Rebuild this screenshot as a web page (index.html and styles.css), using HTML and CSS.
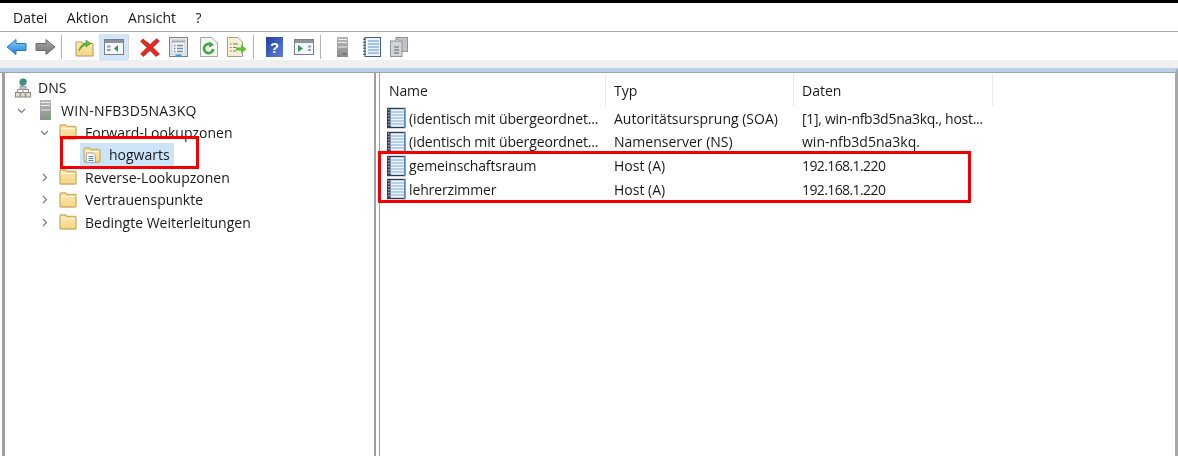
FILE: index.html
```html
<!DOCTYPE html>
<html lang="de">
  <head>
    <meta charset="UTF-8" />
    <title>DNS-Manager</title>
    <link rel="stylesheet" href="styles.css">
  </head>
  <body>
    <svg class="defs" width="0" height="0">
      <defs>
        <linearGradient id="folderFill" x1="0" y1="0" x2="0" y2="1">
          <stop offset="0" stop-color="#fbe9b0" />
          <stop offset="1" stop-color="#f5d586" />
        </linearGradient>
        <linearGradient id="blueArrow" x1="0" y1="0" x2="0" y2="1">
          <stop offset="0" stop-color="#8ad0fa" />
          <stop offset="1" stop-color="#1c80d8" />
        </linearGradient>
        <linearGradient id="grayArrow" x1="0" y1="0" x2="0" y2="1">
          <stop offset="0" stop-color="#a8a8a8" />
          <stop offset="1" stop-color="#747474" />
        </linearGradient>
        <linearGradient id="serverFill" x1="0" y1="0" x2="0" y2="1">
          <stop offset="0" stop-color="#b8b8b8" />
          <stop offset="1" stop-color="#8c8c8c" />
        </linearGradient>
        <linearGradient id="helpFill" x1="0" y1="0" x2="1" y2="1">
          <stop offset="0" stop-color="#1f3f9c" />
          <stop offset="1" stop-color="#5d80d8" />
        </linearGradient>
        <symbol id="folder" viewBox="0 0 18 16">
          <path d="M1 14.5 V2 Q1 1 2 1 H6.5 L8 2.5 H16 Q17 2.5 17 3.5 V14.5 Q17 15 16 15 H2 Q1 15 1 14.5 Z" fill="url(#folderFill)" stroke="#cfae66" stroke-width="1.3" />
          <path d="M2 4.5 H16" stroke="#fff8dc" />
        </symbol>
        <symbol id="record" viewBox="0 0 20 22">
          <rect x="1" y=".8" width="18.4" height="20.4" fill="#2c3d5c" />
          <rect x="18" y=".8" width="1.4" height="20.4" fill="#5f86b8" />
          <rect x="4.6" y="2.2" width="13.4" height="17.6" fill="#edf4fb" />
          <path d="M4.6 5H18M4.6 8H18M4.6 11H18M4.6 14H18M4.6 17H18" stroke="#a3c3e2" stroke-width="1.4" />
          <path d="M2.8 2V20" stroke="#b4bac2" stroke-width="1.4" stroke-dasharray="1.5 1.5" />
        </symbol>
      </defs>
    </svg>

    <nav class="menubar">
      <span>Datei</span>
      <span>Aktion</span>
      <span>Ansicht</span>
      <span>?</span>
    </nav>

    <div class="toolbar">
      <svg class="tool tool-back" width="21" height="18" viewBox="0 0 21 18"><path d="M1 9 L10 1.5 V5.5 H20 V12.5 H10 V16.5 Z" fill="url(#blueArrow)" stroke="#2a78bd" /></svg>
      <svg class="tool tool-forward" width="21" height="18" viewBox="0 0 21 18"><path d="M20 9 L11 1.5 V5.5 H1 V12.5 H11 V16.5 Z" fill="url(#grayArrow)" stroke="#6f6f6f" /></svg>
      <i class="sep sep-a"></i>
      <svg class="tool tool-up" width="19" height="20" viewBox="0 0 19 20"><path d="M1 5 H7 L8 6.5 H18 V19 H1 Z" fill="url(#folderFill)" stroke="#b8975a" /><path d="M4 14 Q5 7 11 6 V3 L16 6.5 L11 10 V8 Q7 9 4 14 Z" fill="#6cb83c" stroke="#4a8f28" stroke-width=".6" /></svg>
      <span class="tool-active">
        <svg width="20" height="16" viewBox="0 0 20 16"><rect x=".5" y=".5" width="19" height="15" fill="#f4f6f8" stroke="#77808a" /><rect x="1" y="1" width="18" height="3" fill="#8d949c" /><path d="M3 6.5H6.5V8.5H3ZM3 10H6.5V12H3Z" fill="#8ba0b8" /><path d="M14 6 V13 L10 9.5 Z" fill="#2f9a4a" /></svg>
      </span>
      <i class="sep sep-b"></i>
      <svg class="tool tool-delete" width="20" height="19" viewBox="0 0 20 19"><path d="M3 1 L10 6.5 L16.5 .8 L19.5 3 L13 9.5 L19.5 16 L16 18.5 L10 12.5 L3.5 18.5 L.6 16 L7 9.5 L.5 3.2 Z" fill="#e02b20" stroke="#a51a14" stroke-width=".6" /></svg>
      <svg class="tool tool-props" width="19" height="20" viewBox="0 0 19 20"><rect x=".5" y=".5" width="18" height="19" fill="#e6e9ec" stroke="#7c8288" /><rect x="3" y="3" width="13" height="14" fill="#f5f6f7" stroke="#b4b9be" stroke-width=".6" /><path d="M3 4.5H16" stroke="#a8adb3" stroke-width="2" /><path d="M5 8.5H6.5M8 8.5H14M5 11.5H6.5M8 11.5H14M5 14.5H6.5M8 14.5H14" stroke="#6f90b5" stroke-width="1.3" /><path d="M6.5 18.5H12.5" stroke="#2fa0e6" stroke-width="2" /></svg>
      <svg class="tool tool-refresh" width="18" height="20" viewBox="0 0 18 20"><path d="M.5 .5H12L17.5 6V19.5H.5Z" fill="#f4f6f2" stroke="#a4a9a4" /><path d="M13.2 12 A4.6 4.6 0 1 1 11 7.6" fill="none" stroke="#3fa648" stroke-width="2.6" /><path d="M9.5 4.5 L14 8 L9 10.5 Z" fill="#3fa648" /></svg>
      <svg class="tool tool-export" width="20" height="20" viewBox="0 0 20 20"><path d="M.5 .5H11L15.5 5V19.5H.5Z" fill="#f6efd4" stroke="#a4a08c" /><path d="M3 7H4.5M6 7H11M3 10.5H4.5M6 10.5H9M3 14H4.5M6 14H9" stroke="#777" stroke-width="1.2" /><path d="M9 10.5H14V7.5L19.5 12L14 16.5V13.5H9Z" fill="#5fbd3a" /></svg>
      <i class="sep sep-c"></i>
      <svg class="tool tool-help" width="17" height="20" viewBox="0 0 17 20"><rect width="17" height="20" fill="url(#helpFill)" /><text x="8.5" y="15.5" text-anchor="middle" class="help-mark">?</text></svg>
      <svg class="tool tool-mmc" width="20" height="16" viewBox="0 0 20 16"><rect x=".5" y=".5" width="19" height="15" fill="#f4f6f8" stroke="#77808a" /><rect x="1" y="1" width="18" height="3" fill="#8d949c" /><path d="M4 6 V13 L9 9.5 Z" fill="#2f9a4a" /><path d="M14 6.5H17V8.5H14ZM14 10H17V12H14Z" fill="#8ba0b8" /></svg>
      <i class="sep sep-d"></i>
      <svg class="tool tool-server" width="11" height="20" viewBox="0 0 11 20"><rect width="11" height="20" fill="url(#serverFill)" /><path d="M1 2.5H10M1 5.5H10M1 10H10" stroke="#efefef" /><rect x="6" y="16" width="3" height="1.5" fill="#6a6a6a" /></svg>
      <svg class="tool tool-notes" width="18" height="20" viewBox="0 0 18 20"><rect x="2" y=".5" width="15.5" height="19" fill="#eef4fa" stroke="#3f5f96" /><path d="M5 4H16M5 7H16M5 10H16M5 13H16M5 16H16" stroke="#8db4da" stroke-width="1.4" /><path d="M1.5 1.5V19" stroke="#555" stroke-width="2.4" stroke-dasharray="1.5 1.5" /></svg>
      <svg class="tool tool-copy" width="18" height="20" viewBox="0 0 18 20"><rect x="6" y=".5" width="11.5" height="14" fill="#bfc3c6" stroke="#8f9498" /><rect x=".5" y="4" width="11.5" height="15.5" fill="#d2d5d7" stroke="#8f9498" /><path d="M5.5 4 V2.5H9V4Z" fill="#e8e8e8" stroke="#8f9498" stroke-width=".6" /><path d="M4 10H9M4 13H9M4 16H9" stroke="#666" /></svg>
    </div>

    <div class="band"></div>

    <main class="panes">
      <section class="tree">
        <div class="node">
          <svg class="node-icon icon-dns" width="16" height="20" viewBox="0 0 16 20"><circle cx="8" cy="4" r="3.6" fill="#3f9c5c" /><path d="M8 .4 A3.6 3.6 0 0 1 11.6 4 H8 Z" fill="#3a80c8" /><path d="M4.5 6.5 A3.6 3.6 0 0 0 8 7.6 V5 Z" fill="#3a80c8" /><path d="M8 7V15M2.5 15V11.5H13.5V15" stroke="#8a8a8a" fill="none" /><rect x="5" y="8.5" width="6" height="3" fill="#c9c4b4" stroke="#8a8a8a" stroke-width=".7" /><rect x=".5" y="14.5" width="4.6" height="4.5" fill="#e2ddcc" stroke="#8a8a8a" /><rect x="10.9" y="14.5" width="4.6" height="4.5" fill="#e2ddcc" stroke="#8a8a8a" /><rect x="5.7" y="14.5" width="4.6" height="4.5" fill="#e2ddcc" stroke="#8a8a8a" /></svg>
          <span>DNS</span>
        </div>
        <div class="node node-server">
          <svg class="chevron" width="9" height="9" viewBox="0 0 9 9"><path d="M1 3 L4.5 6.5 L8 3" /></svg>
          <svg class="node-icon" width="11" height="20" viewBox="0 0 11 20"><rect width="11" height="20" fill="url(#serverFill)" /><path d="M1 2.5H10M1 5.5H10M1 10H10" stroke="#efefef" /><rect x="6" y="16.5" width="3.5" height="2" fill="#5cc04c" /></svg>
          <span class="server-name">WIN-NFB3D5NA3KQ</span>
        </div>
        <div class="node node-zone">
          <svg class="chevron" width="9" height="9" viewBox="0 0 9 9"><path d="M1 3 L4.5 6.5 L8 3" /></svg>
          <svg class="node-icon" width="18" height="16"><use href="#folder" /></svg>
          <span>Forward-Lookupzonen</span>
        </div>
        <div class="node node-leaf">
          <div class="leaf-selected">
            <svg class="node-icon" width="18" height="16" viewBox="0 0 18 16"><use href="#folder" width="18" height="16" /><path d="M3.5 6H10L12.5 8.5V15.5H3.5Z" fill="#f6f8fb" stroke="#8aa0b8" stroke-width=".8" /><path d="M5.5 9.5H10.5M5.5 11.5H10.5M5.5 13.5H10.5" stroke="#4f82c0" /></svg>
            <span>hogwarts</span>
          </div>
        </div>
        <div class="node node-zone">
          <svg class="chevron" width="9" height="9" viewBox="0 0 9 9"><path d="M3 1 L6.5 4.5 L3 8" /></svg>
          <svg class="node-icon" width="18" height="16"><use href="#folder" /></svg>
          <span>Reverse-Lookupzonen</span>
        </div>
        <div class="node node-zone">
          <svg class="chevron" width="9" height="9" viewBox="0 0 9 9"><path d="M3 1 L6.5 4.5 L3 8" /></svg>
          <svg class="node-icon" width="18" height="16"><use href="#folder" /></svg>
          <span>Vertrauenspunkte</span>
        </div>
        <div class="node node-zone">
          <svg class="chevron" width="9" height="9" viewBox="0 0 9 9"><path d="M3 1 L6.5 4.5 L3 8" /></svg>
          <svg class="node-icon" width="18" height="16"><use href="#folder" /></svg>
          <span>Bedingte Weiterleitungen</span>
        </div>
        <div class="mark mark-tree"></div>
      </section>

      <section class="records">
        <div class="row row-head">
          <span class="col-name">Name</span>
          <span class="col-type">Typ</span>
          <span class="col-data">Daten</span>
        </div>
        <div class="row">
          <span class="col-name"><svg width="20" height="22"><use href="#record" /></svg>(identisch mit übergeordnet...</span>
          <span class="col-type">Autoritätsursprung (SOA)</span>
          <span class="col-data data-soa">[1], win-nfb3d5na3kq., host...</span>
        </div>
        <div class="row">
          <span class="col-name"><svg width="20" height="22"><use href="#record" /></svg>(identisch mit übergeordnet...</span>
          <span class="col-type">Namenserver (NS)</span>
          <span class="col-data">win-nfb3d5na3kq.</span>
        </div>
        <div class="row">
          <span class="col-name"><svg width="20" height="22"><use href="#record" /></svg>gemeinschaftsraum</span>
          <span class="col-type">Host (A)</span>
          <span class="col-data data-ip">192.168.1.220</span>
        </div>
        <div class="row">
          <span class="col-name"><svg width="20" height="22"><use href="#record" /></svg>lehrerzimmer</span>
          <span class="col-type">Host (A)</span>
          <span class="col-data data-ip">192.168.1.220</span>
        </div>
        <div class="mark mark-records"></div>
      </section>
    </main>
  </body>
</html>
```

FILE: styles.css
```css
body {
  margin: 0;
  height: 456px;
  overflow: hidden;
  display: flex;
  flex-direction: column;
  background-color: #fff;
  border-top: 3px solid #000;
  box-sizing: border-box;
  font-family: "Open Sans", "Noto Sans", sans-serif;
  font-size: 14px;
  color: #1a1a1a;
}
.defs {
  position: absolute;
}

/* menu */
.menubar {
  height: 28px;
  display: flex;
  align-items: center;
  gap: 19.5px;
  padding-left: 13px;
  border-bottom: 1px solid #a8a8a8;
  flex: none;
  filter: blur(0.3px);
}

/* toolbar */
.toolbar {
  height: 28px;
  flex: none;
  display: flex;
  align-items: center;
  padding: 2px 0 0 6px;
  box-sizing: border-box;
  filter: blur(0.4px);
}
.tool {
  flex: none;
}
.tool-forward {
  margin-left: 8px;
}
.tool-up {
  margin-left: 13px;
}
.tool-active {
  width: 29px;
  height: 27px;
  margin-left: 5px;
  display: flex;
  align-items: center;
  justify-content: center;
  background-color: #d3e6f8;
}
.tool-delete {
  margin-left: 11px;
}
.tool-props,
.tool-export {
  margin-left: 9px;
}
.tool-refresh {
  margin-left: 12px;
}
.tool-help {
  margin-left: 12px;
}
.tool-mmc {
  margin-left: 11px;
}
.tool-server {
  margin-left: 16px;
}
.tool-notes {
  margin-left: 15px;
}
.tool-copy {
  margin-left: 9px;
}
.sep {
  width: 1px;
  height: 24px;
  background-color: #b4b4b4;
  flex: none;
}
.sep-a {
  margin-left: 5px;
}
.sep-b {
  background-color: #d8d8d8;
}
.sep-c,
.sep-d {
  margin-left: 6px;
}
.help-mark {
  font-size: 15px;
  font-weight: bold;
  fill: #fff;
  font-family: "Liberation Sans", sans-serif;
}

.band {
  height: 8px;
  flex: none;
  background-color: #f0f0f0;
}

/* panes */
.panes {
  flex: 1;
  display: flex;
  border-top: 4px solid #b9d1ea;
  border-right: 3px solid #a8a8a8;
  background-color: #fff;
  padding-left: 2px;
  padding-right: 1px;
  background-image: linear-gradient(#9aa5b1, #9aa5b1);
  background-repeat: no-repeat;
  background-size: 100% 1px;
  filter: blur(0.3px);
}
.tree {
  position: relative;
  width: 374px;
  flex: none;
  margin-top: 1px;
  padding-top: 3.5px;
  box-sizing: border-box;
  border-left: 3px solid #a0a0a0;
  border-right: 2px solid #a0a0a0;
}
.node {
  height: 22.4px;
  display: flex;
  align-items: center;
}
.node > span {
  white-space: nowrap;
}
.node-icon {
  flex: none;
}
.icon-dns {
  margin-left: 10px;
  margin-right: 7px;
}
.chevron {
  flex: none;
  fill: none;
  stroke: #7a7a7a;
  stroke-width: 1.2;
}
.node-server {
  padding-left: 12px;
}
.node-server .node-icon {
  margin-left: 14px;
  margin-right: 10px;
}
.server-name {
  letter-spacing: 0.27px;
}
.node-zone {
  padding-left: 35px;
}
.node-zone .node-icon {
  margin-left: 10px;
  margin-right: 8px;
}
.node-leaf {
  padding-left: 75px;
}
.leaf-selected {
  width: 94px;
  height: 23px;
  display: flex;
  align-items: center;
  gap: 8px;
  padding-left: 3px;
  box-sizing: border-box;
  background-color: #cce4f7;
}

/* record list */
.records {
  position: relative;
  flex: 1;
  margin: 1px 0 0 3px;
  border-left: 1px solid #a0a0a0;
}
.row {
  height: 23.7px;
  display: flex;
  align-items: center;
  white-space: nowrap;
}
.row-head {
  height: 33.4px;
  padding-top: 1px;
  box-sizing: border-box;
}
.row-head span {
  height: 100%;
  display: flex;
  align-items: center;
  border-right: 1px solid #e8e8e8;
  box-sizing: border-box;
}
.row-head .col-name {
  padding-left: 9px;
}
.col-name {
  width: 226px;
  flex: none;
  display: flex;
  align-items: center;
  padding-left: 6px;
  box-sizing: border-box;
  letter-spacing: -0.13px;
}
.col-name svg {
  margin-right: 3px;
  flex: none;
}
.col-type {
  width: 188px;
  flex: none;
  padding-left: 8px;
  box-sizing: border-box;
}
.col-data {
  width: 199px;
  flex: none;
  padding-left: 8px;
  box-sizing: border-box;
}
.data-soa {
  letter-spacing: -0.28px;
}
.data-ip {
  letter-spacing: -0.6px;
}

/* red annotations drawn over the screenshot */
.mark {
  position: absolute;
  border: 3px solid #f20000;
  box-sizing: border-box;
}
.mark-tree {
  left: 55px;
  top: 63px;
  width: 139px;
  height: 33px;
}
.mark-records {
  left: -2px;
  top: 78px;
  width: 593px;
  height: 52px;
}
```
